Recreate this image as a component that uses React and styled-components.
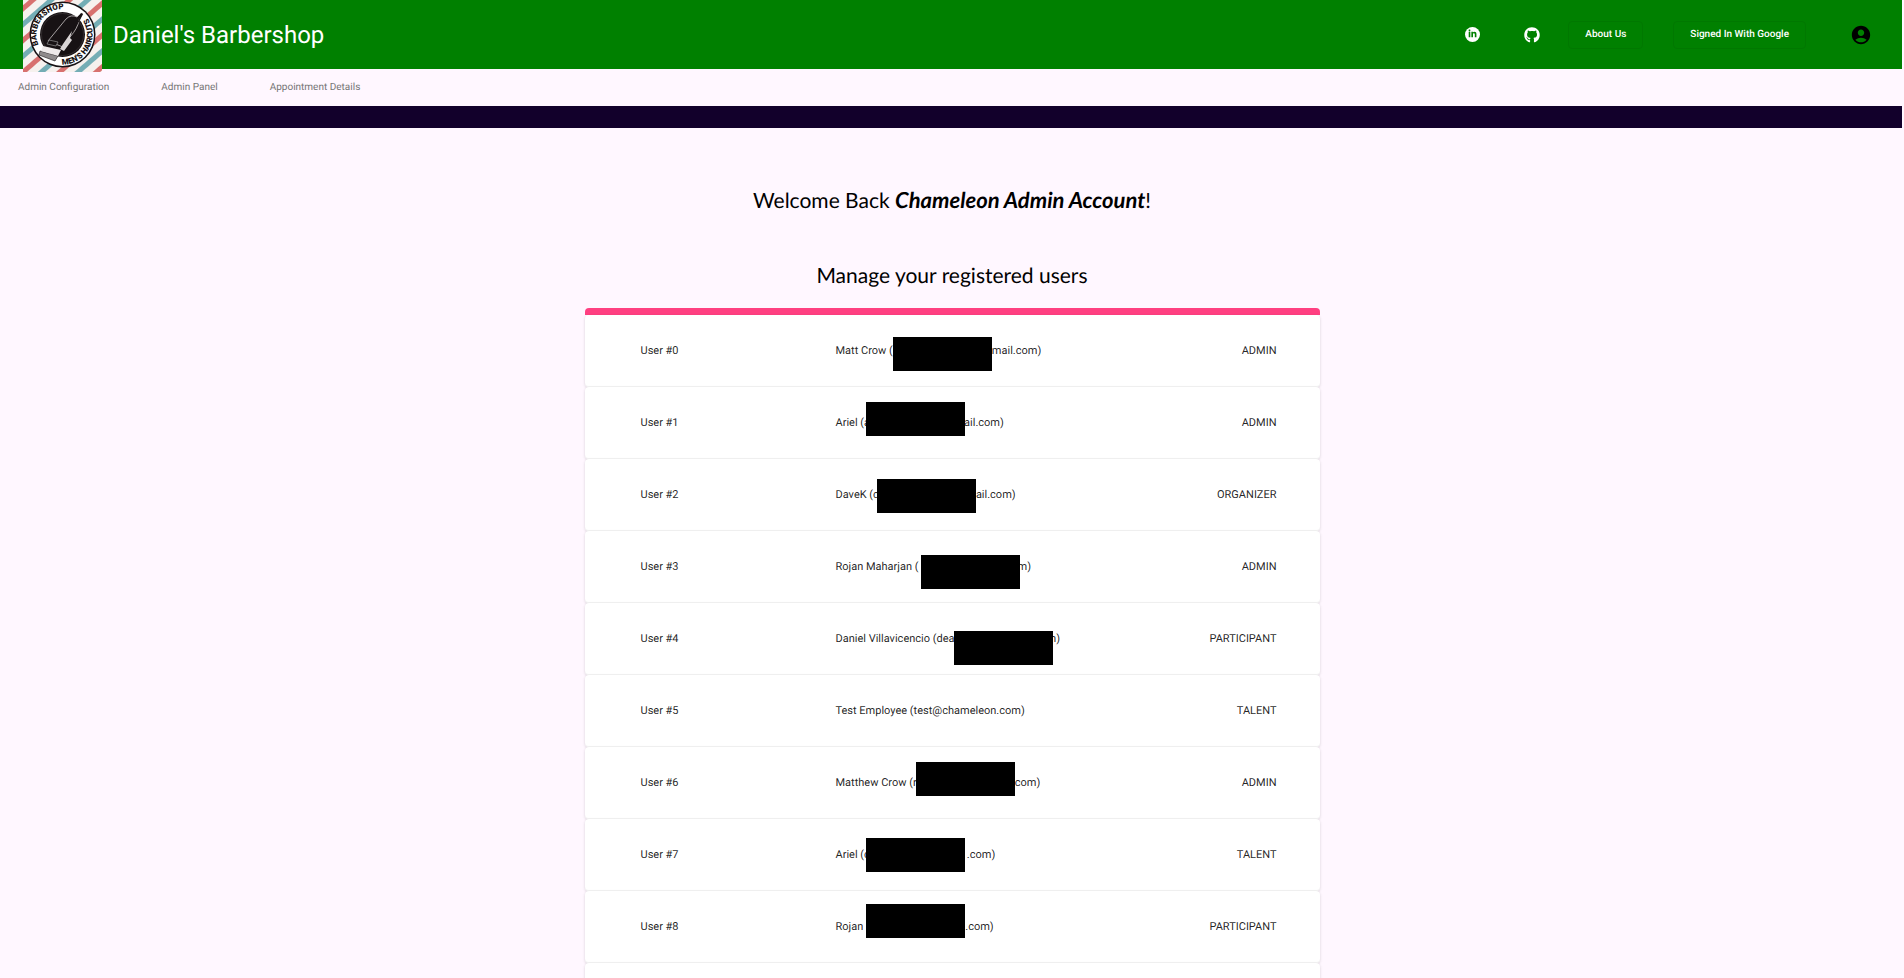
import React from "react";
import styled, { createGlobalStyle } from "styled-components";
import { FaGithub, FaLinkedinIn } from "react-icons/fa";
import { MdAccountCircle } from "react-icons/md";

const GlobalStyle = createGlobalStyle`
  *, *::before, *::after { box-sizing: border-box; }
  body {
    margin: 0;
    background: #fff7ff;
    color: #000;
    font-family: Roboto, "Liberation Sans", sans-serif;
    text-rendering: geometricPrecision;
  }
`;

const Toolbar = styled.header`
  display: flex;
  align-items: center;
  height: 69px;
  margin-right: 2px;
  padding: 0 30px 0 23px;
  background: #008000;
  color: #fff;
`;

const Logo = styled.svg`
  display: block;
  align-self: flex-start;
  flex: none;
  width: 79px;
  height: 72px;
`;

const Brand = styled.h1`
  flex: 1;
  margin: 0;
  padding-left: 11px;
  font-size: 24px;
  font-weight: 400;
  line-height: 32px;
`;

const Actions = styled.nav`
  display: flex;
  align-items: center;
`;

const SocialLink = styled.a`
  display: flex;
  margin-right: ${(p) => p.$gap}px;
  color: #fff;
`;

const ToolbarButton = styled.button`
  height: 28px;
  margin-right: ${(p) => p.$gap}px;
  padding: 0 16px;
  border: 1px solid #007800;
  border-radius: 4px;
  background: transparent;
  color: #fff;
  font: 500 10px/16px Roboto, "Liberation Sans", sans-serif;
  text-rendering: inherit;
  cursor: pointer;
`;

const AccountButton = styled.button`
  display: flex;
  padding: 0;
  border: 0;
  background: transparent;
  color: #000;
  cursor: pointer;
`;

const SubNav = styled.nav`
  display: flex;
  align-items: center;
  gap: 52px;
  height: 37px;
  padding: 0 18px;
`;

const SubNavLink = styled.a`
  color: #757575;
  font-size: 10px;
  line-height: 16px;
  text-decoration: none;
`;

const Band = styled.div`
  height: 22px;
  margin-right: 2px;
  background: #12002b;
`;

const Main = styled.main`
  display: flex;
  flex-direction: column;
  align-items: center;
  padding: 56px 24px 0;
`;

const Heading = styled.h2`
  margin: 0;
  padding-bottom: ${(p) => p.$space}px;
  font-family: Lato, "Liberation Sans", sans-serif;
  font-size: 21px;
  font-weight: 400;
  line-height: 32px;
`;

const AccountName = styled.em`
  font-size: 22px;
  font-weight: 700;
`;

const UserTable = styled.table`
  display: block;
  width: 100%;
  max-width: 735px;
  border-top: 7px solid #ff4081;
  border-radius: 4px;
  color: rgba(0, 0, 0, 0.87);
  font-size: 11px;
  line-height: 16px;
`;

const UserBody = styled.tbody`
  display: block;
`;

const UserRow = styled.tr`
  display: grid;
  grid-template-columns: 195px 1fr auto;
  align-items: center;
  height: 72px;
  padding: 0 43px 0 56px;
  border-radius: 4px;
  background: #fff;
  box-shadow: 0 1px 3px rgba(0, 0, 0, 0.16), inset 0 -1px 0 #f4f4f4;
`;

const Cell = styled.td`
  padding: 0;
  white-space: nowrap;
`;

const Person = styled.div`
  display: flex;
  align-items: center;
  height: 16px;
`;

const Redaction = styled.span`
  position: relative;
  top: ${(p) => p.$shift}px;
  flex: none;
  width: 99px;
  height: 34px;
  margin: 0 ${(p) => p.$after}px 0 ${(p) => p.$before}px;
  background: #000;
`;

const users = [
  { name: "Matt Crow (", rest: "mail.com)", role: "ADMIN", bar: [0, 0, 3] },
  { name: "Ariel (a", rest: "ail.com)", role: "ADMIN", bar: [-4, -1, -4] },
  { name: "DaveK (c", rest: "ail.com)", role: "ORGANIZER", bar: [-2, 0, 1] },
  { name: "Rojan Maharjan (", rest: "m)", role: "ADMIN", bar: [2, -2, 5] },
  { name: "Daniel Villavicencio (dea", rest: "m)", role: "PARTICIPANT", bar: [-1, -6, 9] },
  { name: "Test Employee (test@chameleon.com)", role: "TALENT" },
  { name: "Matthew Crow (r", rest: "com)", role: "ADMIN", bar: [-1, 0, -4] },
  { name: "Ariel (c", rest: ".com)", role: "TALENT", bar: [-4, 2, 0] },
  { name: "Rojan", rest: ".com)", role: "PARTICIPANT", bar: [3, 0, -6] },
  { name: "", role: "" },
];

function BarbershopLogo() {
  return (
    <Logo viewBox="0 0 79 72" role="img" aria-label="Barbershop men's haircuts">
      <defs>
        <pattern id="stripes" width="24" height="24" patternUnits="userSpaceOnUse" patternTransform="translate(3 0) rotate(-41)">
          <rect width="24" height="24" fill="#f6f1ee" />
          <rect y="2" width="24" height="5" fill="#d8716f" />
          <rect y="14" width="24" height="5" fill="#74adb5" />
        </pattern>
        <path id="ring" d="M15.5 45 A26 26 0 1 1 63.5 45" />
        <path id="arc-bottom" d="M39 64.5 A30 30 0 0 0 60 12.5" />
      </defs>
      <rect width="79" height="72" fill="url(#stripes)" />
      <circle cx="39.5" cy="34.5" r="33" fill="#171214" />
      <circle cx="39.5" cy="34.5" r="31.5" fill="#fff" />
      <circle cx="39.5" cy="34.5" r="22.5" fill="#171214" />
      <circle cx="39.5" cy="34.5" r="21" fill="none" stroke="#4c4648" strokeWidth="0.5" />
      <text fontFamily="Roboto, sans-serif" fontWeight="900" fontSize="8" fill="#171214">
        <textPath href="#ring">BARBERSHOP</textPath>
        <textPath href="#arc-bottom">MEN'S HAIRCUTS</textPath>
      </text>
      <path d="M25 41 L43 19 Q48 14 54 17 L58 13 L60 14 L56 20 Q55 28 47 37 L40 47 Z" fill="#171214" stroke="#c9c4c4" strokeWidth="0.8" />
      <path d="M56 19 L58 13 L60 14 L57 20 Q54 25 51 29 Z" fill="#171214" />
      <path d="M40 44 L49 31 L47 38 L49 40 L41 51 L37 49 Z" fill="#d9d5d5" />
      <path d="M26 40 L35 42 L33 46 L24 44 Z" fill="#171214" stroke="#aaa" strokeWidth="0.6" />
      <path d="M17 51 L35 56 L32 61 L16 55 Z" fill="#8f8b8c" stroke="#171214" strokeWidth="0.6" />
      <path d="M20 46 L38 50 L35 56 L18 51 Z" fill="#eeeaea" />
    </Logo>
  );
}

function LinkedInIcon() {
  return (
    <svg width="15" height="15" viewBox="0 0 20 20" aria-hidden="true">
      <circle cx="10" cy="10" r="10" fill="#fff" />
      <FaLinkedinIn x="4" y="3" size={12} color="#008000" />
    </svg>
  );
}

export default function App() {
  return (
    <>
      <GlobalStyle />
      <Toolbar>
        <BarbershopLogo />
        <Brand>Daniel's Barbershop</Brand>
        <Actions aria-label="Site">
          <SocialLink href="#linkedin" aria-label="LinkedIn" $gap={44}>
            <LinkedInIcon />
          </SocialLink>
          <SocialLink href="#github" aria-label="GitHub" $gap={28}>
            <FaGithub size={16} />
          </SocialLink>
          <ToolbarButton type="button" $gap={30}>About Us</ToolbarButton>
          <ToolbarButton type="button" $gap={44}>Signed In With Google</ToolbarButton>
          <AccountButton type="button" aria-label="Account">
            <MdAccountCircle size={22} />
          </AccountButton>
        </Actions>
      </Toolbar>
      <SubNav aria-label="Admin">
        <SubNavLink href="#configuration">Admin Configuration</SubNavLink>
        <SubNavLink href="#panel">Admin Panel</SubNavLink>
        <SubNavLink href="#appointments">Appointment Details</SubNavLink>
      </SubNav>
      <Band />
      <Main>
        <Heading $space={43}>
          Welcome Back <AccountName>Chameleon Admin Account</AccountName>!
        </Heading>
        <Heading $space={16}>Manage your registered users</Heading>
        <UserTable aria-label="Registered users">
          <UserBody>
            {users.map((user, index) => (
              <UserRow key={index}>
                <Cell>{user.name && `User #${index}`}</Cell>
                <Cell>
                  <Person>
                    {user.name}
                    {user.bar && (
                      <Redaction $before={user.bar[0]} $after={user.bar[1]} $shift={user.bar[2]} />
                    )}
                    {user.rest}
                  </Person>
                </Cell>
                <Cell>{user.role}</Cell>
              </UserRow>
            ))}
          </UserBody>
        </UserTable>
      </Main>
    </>
  );
}
